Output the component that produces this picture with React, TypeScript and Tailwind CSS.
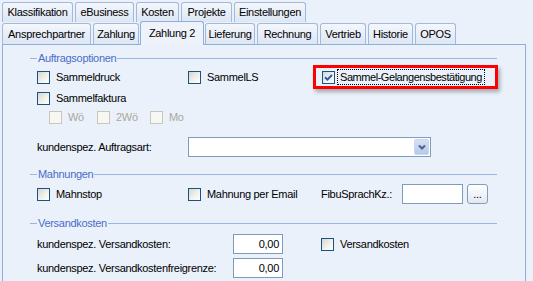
import React from "react";

function Tab({ label, w, selected }: { label: string; w: string; selected?: boolean }) {
  return (
    <div
      className={
        "flex items-center justify-center border border-b-0 rounded-t-[3px] " +
        w +
        (selected
          ? " h-[24px] -mb-px relative z-10 border-[#8FAEDB] bg-[#EEF3FB]"
          : " h-[21px] border-[#A3B9D9] bg-gradient-to-b from-[#F4F7FC] to-[#DDE6F4]")
      }
    >
      <span className="whitespace-nowrap">{label}</span>
    </div>
  );
}

function Tab1({ label, w }: { label: string; w: string }) {
  return (
    <div
      className={
        "h-[20px] flex items-center justify-center border border-b-0 rounded-t-[3px] border-[#A3B9D9] bg-gradient-to-b from-[#F4F7FC] to-[#DDE6F4] " +
        w
      }
    >
      <span className="whitespace-nowrap">{label}</span>
    </div>
  );
}

function Box({ checked, disabled }: { checked?: boolean; disabled?: boolean }) {
  return (
    <span
      className={
        "w-[13px] h-[13px] shrink-0 border flex items-center justify-center " +
        (disabled
          ? "border-[#C9C7BA] bg-[#F7F7F4]"
          : "border-[#1C5180] bg-gradient-to-br from-[#D6D6CE] via-[#EFEFEA] to-[#FFFFFF]")
      }
    >
      {checked && (
        <svg width="11" height="11" viewBox="0 0 11 11">
          <path d="M2 5.2 L4.4 7.6 L9 3" stroke="#2B5CB5" strokeWidth="2" fill="none" />
        </svg>
      )}
    </span>
  );
}

function Check({ label, w, disabled }: { label: string; w?: string; disabled?: boolean }) {
  return (
    <div className={"flex items-center " + (w ?? "")}>
      <Box disabled={disabled} />
      <span className={"ml-[6px] whitespace-nowrap " + (disabled ? "text-[#ACA899]" : "")}>{label}</span>
    </div>
  );
}

function Legend({ label }: { label: string }) {
  return (
    <div className="flex items-center h-[14px] w-[467px]">
      <div className="w-[7px] h-px bg-[#9AB7E1]" />
      <span className="text-[#4A6DC8] px-[1px] whitespace-nowrap">{label}</span>
      <div className="flex-1 h-px bg-[#9AB7E1]" />
    </div>
  );
}

export default function App() {
  return (
    <div className="w-[533px] h-[281px] overflow-hidden bg-[#EAF1FB] text-black text-[11px] tracking-[-0.3px] leading-none font-['Liberation_Sans',Arial,sans-serif]">
      {/* tab row 1 */}
      <div className="flex items-end h-[22px] pl-[2px] gap-[2px]">
        <Tab1 label="Klassifikation" w="w-[71px]" />
        <Tab1 label="eBusiness" w="w-[59px]" />
        <Tab1 label="Kosten" w="w-[43px]" />
        <Tab1 label="Projekte" w="w-[51px]" />
        <Tab1 label="Einstellungen" w="w-[72px]" />
      </div>
      {/* tab row 2 */}
      <div className="flex items-end h-[22px] pl-[2px] gap-[2px]">
        <Tab label="Ansprechpartner" w="w-[89px]" />
        <Tab label="Zahlung" w="w-[46px]" />
        <Tab label="Zahlung 2" w="w-[64px] -mx-[1px]" selected />
        <Tab label="Lieferung" w="w-[50px]" />
        <Tab label="Rechnung" w="w-[61px]" />
        <Tab label="Vertrieb" w="w-[46px]" />
        <Tab label="Historie" w="w-[45px]" />
        <Tab label="OPOS" w="w-[41px]" />
      </div>
      {/* panel */}
      <div className="ml-[2px] w-[524px] h-[237px] border-t border-l border-r border-[#8FB0DC] pl-[27px]">
        <div className="mt-[6px]">
          <Legend label="Auftragsoptionen" />
        </div>
        <div className="flex items-center h-[24px] pl-[7px]">
          <Check label="Sammeldruck" w="w-[151px]" />
          <Check label="SammelLS" w="w-[125px]" />
          <div className="w-[185px] h-[24px] border-[3px] border-[#FF0000] flex items-center pl-[6px] shadow-[2px_3px_4px_rgba(0,0,0,0.3)]">
            <Box checked />
            <span className="ml-[2px] h-[16px] px-[2px] flex items-center border border-dotted border-black whitespace-nowrap tracking-[-0.45px]">
              Sammel-Gelangensbestätigung
            </span>
          </div>
        </div>
        <div className="flex items-center h-[18px] pl-[7px]">
          <Check label="Sammelfaktura" />
        </div>
        <div className="flex items-center h-[20px] pl-[19px]">
          <Check label="Wö" w="w-[48px]" disabled />
          <Check label="2Wö" w="w-[53px]" disabled />
          <Check label="Mo" disabled />
        </div>
        <div className="flex items-center h-[20px] mt-[10px] pl-[7px]">
          <span className="w-[151px] whitespace-nowrap">kundenspez. Auftragsart:</span>
          <div className="w-[243px] h-[20px] border border-[#7F9DB9] bg-white flex justify-end p-px">
            <div className="w-[15px] h-full rounded-[2px] border border-[#C9D8F0] bg-gradient-to-b from-[#D4E0F5] to-[#B5C9EC] flex items-center justify-center">
              <svg width="8" height="6" viewBox="0 0 8 6">
                <path d="M1 1.5 L4 4.5 L7 1.5" stroke="#4D6185" strokeWidth="2" fill="none" />
              </svg>
            </div>
          </div>
        </div>
        <div className="mt-[10px]">
          <Legend label="Mahnungen" />
        </div>
        <div className="flex items-center h-[20px] mt-[3px] pl-[7px]">
          <Check label="Mahnstop" w="w-[151px]" />
          <Check label="Mahnung per Email" w="w-[133px]" />
          <span className="w-[81px] whitespace-nowrap">FibuSprachKz.:</span>
          <div className="w-[61px] h-[20px] border border-[#7F9DB9] bg-white" />
          <div className="ml-[4px] w-[21px] h-[20px] rounded-[3px] border border-[#7F9DB9] bg-gradient-to-b from-[#FFFFFF] to-[#E3E8F1] flex items-end justify-center pb-[3px]">
            <span>...</span>
          </div>
        </div>
        <div className="mt-[12px]">
          <Legend label="Versandkosten" />
        </div>
        <div className="flex items-center h-[20px] mt-[4px] pl-[7px]">
          <span className="w-[196px] whitespace-nowrap">kundenspez. Versandkosten:</span>
          <div className="w-[50px] h-[20px] border border-[#7F9DB9] bg-white flex items-center justify-end pr-[3px]">
            0,00
          </div>
          <div className="ml-[38px]">
            <Check label="Versandkosten" />
          </div>
        </div>
        <div className="flex items-center h-[20px] mt-[4px] pl-[7px]">
          <span className="w-[196px] whitespace-nowrap">kundenspez. Versandkostenfreigrenze:</span>
          <div className="w-[50px] h-[20px] border border-[#7F9DB9] bg-white flex items-center justify-end pr-[3px]">
            0,00
          </div>
        </div>
      </div>
    </div>
  );
}
